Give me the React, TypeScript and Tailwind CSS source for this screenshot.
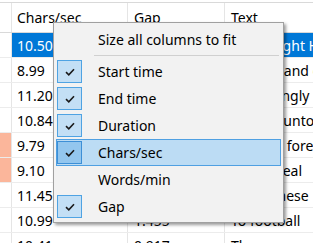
import React from "react";

const rows = [
  { c: "10.50", g: "2.002", t: "Every night Harry", sel: true, o: false },
  { c: "8.99", g: "1.001", t: "Hungry and cold", sel: false, o: false },
  { c: "11.20", g: "0.834", t: "Surprisingly", sel: false, o: false },
  { c: "10.84", g: "1.168", t: "He said unto", sel: false, o: false },
  { c: "9.79", g: "0.667", t: "Into the forest", sel: false, o: true },
  { c: "9.10", g: "0.500", t: "It is so real", sel: false, o: true },
  { c: "11.45", g: "1.335", t: "Lot of these", sel: false, o: false },
  { c: "10.99", g: "1.455", t: "To football", sel: false, o: false },
  { c: "10.41", g: "0.917", t: "The game", sel: false, o: false },
];

const items = [
  { label: "Start time", checked: true, hi: false },
  { label: "End time", checked: true, hi: false },
  { label: "Duration", checked: true, hi: false },
  { label: "Chars/sec", checked: true, hi: true },
  { label: "Words/min", checked: false, hi: false },
  { label: "Gap", checked: true, hi: false },
];

function Check() {
  return (
    <svg width="10" height="8" viewBox="0 0 10 8">
      <path d="M1 4.2 L3.8 6.8 L9 1.2" fill="none" stroke="#1a1a1a" strokeWidth="1.6" />
    </svg>
  );
}

export default function App() {
  return (
    <div
      className="relative w-[313px] h-[243px] overflow-hidden bg-white text-[14px] text-black"
      style={{ fontFamily: '"Noto Sans", "Open Sans", sans-serif' }}
    >
      <div className="pt-[2px]">
        <div className="flex h-[31px] border-t border-b border-[#d9d9d9] items-center">
          <div className="w-[12px] h-full border-r border-[#e5e5e5]" />
          <div className="w-[116px] h-full border-r border-[#e5e5e5] pl-[5px] flex items-center">Chars/sec</div>
          <div className="w-[97px] h-full border-r border-[#e5e5e5] pl-[6px] flex items-center">Gap</div>
          <div className="flex-1 h-full pl-[6px] flex items-center">Text</div>
        </div>
        {rows.map((r, i) => (
          <div key={i} className="flex h-[25px] border-b border-[#ececec] whitespace-nowrap">
            <div className={`w-[12px] h-full border-r border-[#e5e5e5] ${r.o ? "bg-[#fbb69b]" : ""}`} />
            <div className={`w-[116px] h-full pl-[5px] flex items-center border-r ${r.sel ? "bg-[#0078d7] text-white border-[#0078d7]" : "border-[#e5e5e5]"}`}>{r.c}</div>
            <div className={`w-[97px] h-full pl-[6px] flex items-center border-r ${r.sel ? "bg-[#0078d7] text-white border-[#0078d7]" : "border-[#e5e5e5]"}`}>{r.g}</div>
            <div className={`flex-1 h-full pl-[6px] flex items-center overflow-hidden ${r.sel ? "bg-[#0078d7] text-white" : ""}`}>{r.t}</div>
          </div>
        ))}
      </div>

      <div className="absolute left-[53px] top-[22px] w-[231px] bg-[#f2f2f2] border border-[#a0a0a0] shadow-[2px_2px_3px_rgba(0,0,0,0.4)] px-[2px] py-[2px] text-[14px]">
        <div className="h-[28px] flex items-center pl-[42px]">Size all columns to fit</div>
        <div className="ml-[38px] mr-[2px] my-[2px] h-px bg-[#d0d0d0]" />
        {items.map((it, i) => (
          <div
            key={i}
            className={`h-[27px] flex items-center border ${it.hi ? "bg-[#bcdcf4] border-[#4fa0e2]" : "border-transparent"}`}
          >
            <div
              className={`w-[25px] h-[23px] flex items-center justify-center border ${
                it.checked ? (it.hi ? "bg-[#93c6ee] border-[#3d8fd6]" : "bg-[#c3dff5] border-[#4fa3e3]") : "border-transparent"
              }`}
            >
              {it.checked && <Check />}
            </div>
            <div className="pl-[16px]">{it.label}</div>
          </div>
        ))}
      </div>
    </div>
  );
}
